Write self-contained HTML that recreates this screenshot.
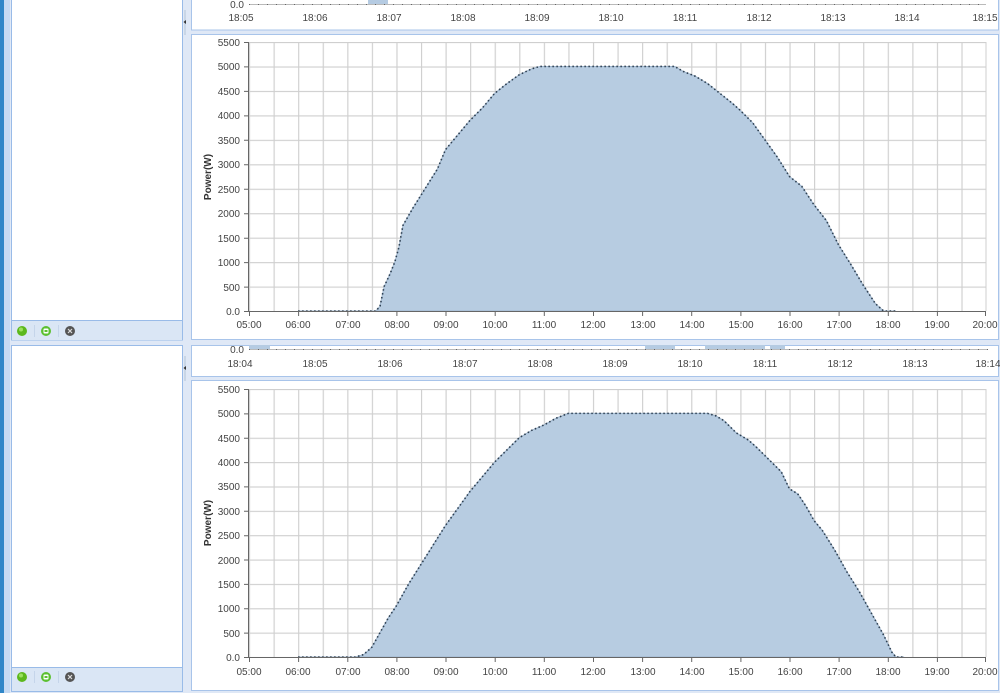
<!DOCTYPE html>
<html><head><meta charset="utf-8"><style>
html,body{margin:0;padding:0;width:1000px;height:693px;overflow:hidden;background:#dfe8f6}
svg{display:block}
text{font-family:"Liberation Sans",sans-serif;font-size:10px;fill:#444}
</style></head><body>
<svg width="1000" height="693" viewBox="0 0 1000 693" xmlns="http://www.w3.org/2000/svg">
<defs>
<pattern id="g1" x="249" y="42" width="24.567" height="24.455" patternUnits="userSpaceOnUse">
<path d="M0.5 0V24.455M0 0.5H24.567" stroke="#cfcfcf" stroke-width="1.3" fill="none"/>
</pattern>
<pattern id="g2" x="249" y="389" width="24.567" height="24.36" patternUnits="userSpaceOnUse">
<path d="M0.5 0V24.36M0 0.5H24.567" stroke="#cfcfcf" stroke-width="1.3" fill="none"/>
</pattern>
</defs>
<rect width="1000" height="693" fill="#dfe8f6"/>
<rect x="0" y="0" width="4" height="693" fill="#2f86c8"/>
<rect x="4" y="0" width="6" height="693" fill="#c5daf3"/>
<rect x="11.5" y="-1" width="171" height="341" fill="#fff" stroke="#99bbe8"/>
<rect x="12" y="320" width="170" height="20" fill="#dae6f5"/>
<line x1="12" y1="320.5" x2="182" y2="320.5" stroke="#99bbe8"/>
<rect x="11.5" y="345.5" width="171" height="346" fill="#fff" stroke="#99bbe8"/>
<rect x="12" y="667" width="170" height="24" fill="#dae6f5"/>
<line x1="12" y1="667.5" x2="182" y2="667.5" stroke="#99bbe8"/>
<g transform="translate(0,331)">
<circle cx="22" cy="0" r="5" fill="#5cb81d"/><circle cx="21" cy="-1.5" r="2" fill="#9be060"/>
<line x1="34.5" y1="-6" x2="34.5" y2="6" stroke="#c5d5ea"/>
<circle cx="46" cy="0" r="5" fill="#5cc030"/><rect x="43.5" y="-2.5" width="5" height="5" rx="1" fill="#fff"/><rect x="44.5" y="-1" width="3" height="2" fill="#5cc030"/>
<line x1="58.5" y1="-6" x2="58.5" y2="6" stroke="#c5d5ea"/>
<circle cx="70" cy="0" r="5" fill="#555"/><path d="M68 -2L72 2M72 -2L68 2" stroke="#ddd" stroke-width="1.2"/>
</g>
<g transform="translate(0,677)">
<circle cx="22" cy="0" r="5" fill="#5cb81d"/><circle cx="21" cy="-1.5" r="2" fill="#9be060"/>
<line x1="34.5" y1="-6" x2="34.5" y2="6" stroke="#c5d5ea"/>
<circle cx="46" cy="0" r="5" fill="#5cc030"/><rect x="43.5" y="-2.5" width="5" height="5" rx="1" fill="#fff"/><rect x="44.5" y="-1" width="3" height="2" fill="#5cc030"/>
<line x1="58.5" y1="-6" x2="58.5" y2="6" stroke="#c5d5ea"/>
<circle cx="70" cy="0" r="5" fill="#555"/><path d="M68 -2L72 2M72 -2L68 2" stroke="#ddd" stroke-width="1.2"/>
</g>
<rect x="183" y="0" width="6" height="341" fill="#dfe8f6"/>
<rect x="184" y="10" width="2" height="25" fill="#c9d6e6"/>
<path d="M186 20L183.5 22L186 24Z" fill="#333"/>
<rect x="184" y="356" width="2" height="25" fill="#c9d6e6"/>
<path d="M186 366L183.5 368L186 370Z" fill="#333"/>

<rect x="191.5" y="-1" width="807" height="31" fill="#fff" stroke="#a8c4ea"/>
<rect x="368" y="0" width="20" height="4" fill="#b5cbe2"/>
<line x1="249" y1="4.5" x2="986" y2="4.5" stroke="#555" stroke-dasharray="1 8"/>
<line x1="249" y1="4.5" x2="986" y2="4.5" stroke="#777" stroke-width="0.6"/>
<text x="244" y="8" text-anchor="end">0.0</text>
<g text-anchor="middle">
<text x="241" y="21">18:05</text><text x="315" y="21">18:06</text><text x="389" y="21">18:07</text><text x="463" y="21">18:08</text><text x="537" y="21">18:09</text><text x="611" y="21">18:10</text><text x="685" y="21">18:11</text><text x="759" y="21">18:12</text><text x="833" y="21">18:13</text><text x="907" y="21">18:14</text><text x="985" y="21">18:15</text>
</g>

<rect x="191.5" y="34.5" width="807" height="305" fill="#fff" stroke="#a8c4ea"/>
<rect x="249" y="42" width="737" height="269" fill="url(#g1)"/>
<line x1="986" y1="42" x2="986" y2="311" stroke="#cfcfcf"/>
<svg x="249" y="42" width="737" height="269" viewBox="0 0 900 5500" preserveAspectRatio="none" overflow="visible">
<g transform="translate(0,5500) scale(1,-1)">
<polygon fill="#b7cce1" stroke="#9fb6ce" vector-effect="non-scaling-stroke" points="60,0 155,0 160,100 165,500 172,750 178,1000 183,1300 188,1750 200,2100 215,2500 230,2900 240,3300 255,3600 270,3900 285,4150 300,4450 315,4650 330,4830 345,4950 355,5000 520,5000 530,4900 545,4800 560,4650 575,4450 590,4250 600,4100 615,3850 630,3500 645,3150 660,2750 675,2550 690,2170 705,1850 720,1350 735,950 750,530 765,150 775,0 790,0"/>
<polyline fill="none" stroke="#2c3e50" stroke-width="1.6" stroke-dasharray="1.5 2.5" vector-effect="non-scaling-stroke" points="60,0 155,0 160,100 165,500 172,750 178,1000 183,1300 188,1750 200,2100 215,2500 230,2900 240,3300 255,3600 270,3900 285,4150 300,4450 315,4650 330,4830 345,4950 355,5000 520,5000 530,4900 545,4800 560,4650 575,4450 590,4250 600,4100 615,3850 630,3500 645,3150 660,2750 675,2550 690,2170 705,1850 720,1350 735,950 750,530 765,150 775,0 790,0"/>
</g></svg>
<line x1="248.5" y1="42" x2="248.5" y2="311" stroke="#666"/>
<line x1="248" y1="311.5" x2="986" y2="311.5" stroke="#666"/>
<g stroke="#666">
<path d="M244 42.5H249M244 66.9H249M244 91.4H249M244 115.9H249M244 140.3H249M244 164.8H249M244 189.2H249M244 213.7H249M244 238.2H249M244 262.6H249M244 287.1H249M244 311.5H249"/>
<path d="M249.5 311V316M298.6 311V316M347.8 311V316M396.9 311V316M446 311V316M495.2 311V316M544.3 311V316M593.5 311V316M642.6 311V316M691.7 311V316M740.9 311V316M790 311V316M839.1 311V316M888.3 311V316M937.4 311V316M985.5 311V316"/>
</g>
<g text-anchor="end">
<text x="240" y="46">5500</text><text x="240" y="70">5000</text><text x="240" y="95">4500</text><text x="240" y="119">4000</text><text x="240" y="144">3500</text><text x="240" y="168">3000</text><text x="240" y="193">2500</text><text x="240" y="217">2000</text><text x="240" y="242">1500</text><text x="240" y="266">1000</text><text x="240" y="291">500</text><text x="240" y="315">0.0</text>
</g>
<g text-anchor="middle">
<text x="249" y="328">05:00</text><text x="298" y="328">06:00</text><text x="348" y="328">07:00</text><text x="397" y="328">08:00</text><text x="446" y="328">09:00</text><text x="495" y="328">10:00</text><text x="544" y="328">11:00</text><text x="593" y="328">12:00</text><text x="643" y="328">13:00</text><text x="692" y="328">14:00</text><text x="741" y="328">15:00</text><text x="790" y="328">16:00</text><text x="839" y="328">17:00</text><text x="888" y="328">18:00</text><text x="937" y="328">19:00</text><text x="985" y="328">20:00</text>
</g>
<text x="211" y="177" text-anchor="middle" transform="rotate(-90 211 177)" style="font-weight:bold;font-size:10px;fill:#333">Power(W)</text>

<rect x="191.5" y="345.5" width="807" height="31" fill="#fff" stroke="#a8c4ea"/>
<rect x="249" y="345" width="21" height="4" fill="#b5cbe2"/>
<rect x="645" y="345" width="30" height="4" fill="#b5cbe2"/>
<rect x="705" y="345" width="60" height="4" fill="#b5cbe2"/>
<rect x="770" y="345" width="15" height="4" fill="#b5cbe2"/>
<line x1="249" y1="349.5" x2="988" y2="349.5" stroke="#555" stroke-dasharray="1 8"/>
<line x1="249" y1="349.5" x2="988" y2="349.5" stroke="#777" stroke-width="0.6"/>
<text x="244" y="353" text-anchor="end">0.0</text>
<g text-anchor="middle">
<text x="240" y="367">18:04</text><text x="315" y="367">18:05</text><text x="390" y="367">18:06</text><text x="465" y="367">18:07</text><text x="540" y="367">18:08</text><text x="615" y="367">18:09</text><text x="690" y="367">18:10</text><text x="765" y="367">18:11</text><text x="840" y="367">18:12</text><text x="915" y="367">18:13</text><text x="988" y="367">18:14</text>
</g>

<rect x="191.5" y="380.5" width="807" height="310" fill="#fff" stroke="#a8c4ea"/>
<rect x="249" y="389" width="737" height="268" fill="url(#g2)"/>
<line x1="986" y1="389" x2="986" y2="657" stroke="#cfcfcf"/>
<svg x="249" y="389" width="737" height="268" viewBox="0 0 900 5500" preserveAspectRatio="none" overflow="visible">
<g transform="translate(0,5500) scale(1,-1)">
<polygon fill="#b7cce1" stroke="#9fb6ce" vector-effect="non-scaling-stroke" points="60,0 130,0 140,50 150,200 160,500 170,800 180,1050 195,1500 210,1900 225,2300 240,2700 255,3050 270,3400 285,3700 300,4000 315,4250 330,4500 345,4650 360,4760 375,4900 390,5000 560,5000 570,4950 580,4850 595,4600 610,4450 620,4300 635,4050 650,3800 660,3450 670,3350 680,3100 690,2800 700,2600 715,2200 730,1750 745,1350 760,900 775,450 785,100 790,0 800,0"/>
<polyline fill="none" stroke="#2c3e50" stroke-width="1.6" stroke-dasharray="1.5 2.5" vector-effect="non-scaling-stroke" points="60,0 130,0 140,50 150,200 160,500 170,800 180,1050 195,1500 210,1900 225,2300 240,2700 255,3050 270,3400 285,3700 300,4000 315,4250 330,4500 345,4650 360,4760 375,4900 390,5000 560,5000 570,4950 580,4850 595,4600 610,4450 620,4300 635,4050 650,3800 660,3450 670,3350 680,3100 690,2800 700,2600 715,2200 730,1750 745,1350 760,900 775,450 785,100 790,0 800,0"/>
</g></svg>
<line x1="248.5" y1="389" x2="248.5" y2="657" stroke="#666"/>
<line x1="248" y1="657.5" x2="986" y2="657.5" stroke="#666"/>
<g stroke="#666">
<path d="M244 389.5H249M244 413.9H249M244 438.2H249M244 462.6H249M244 486.9H249M244 511.3H249M244 535.7H249M244 560H249M244 584.4H249M244 608.7H249M244 633.1H249M244 657.5H249"/>
<path d="M249.5 657V662M298.6 657V662M347.8 657V662M396.9 657V662M446 657V662M495.2 657V662M544.3 657V662M593.5 657V662M642.6 657V662M691.7 657V662M740.9 657V662M790 657V662M839.1 657V662M888.3 657V662M937.4 657V662M985.5 657V662"/>
</g>
<g text-anchor="end">
<text x="240" y="393">5500</text><text x="240" y="417">5000</text><text x="240" y="442">4500</text><text x="240" y="466">4000</text><text x="240" y="490">3500</text><text x="240" y="515">3000</text><text x="240" y="539">2500</text><text x="240" y="564">2000</text><text x="240" y="588">1500</text><text x="240" y="612">1000</text><text x="240" y="637">500</text><text x="240" y="661">0.0</text>
</g>
<g text-anchor="middle">
<text x="249" y="675">05:00</text><text x="298" y="675">06:00</text><text x="348" y="675">07:00</text><text x="397" y="675">08:00</text><text x="446" y="675">09:00</text><text x="495" y="675">10:00</text><text x="544" y="675">11:00</text><text x="593" y="675">12:00</text><text x="643" y="675">13:00</text><text x="692" y="675">14:00</text><text x="741" y="675">15:00</text><text x="790" y="675">16:00</text><text x="839" y="675">17:00</text><text x="888" y="675">18:00</text><text x="937" y="675">19:00</text><text x="985" y="675">20:00</text>
</g>
<text x="211" y="523" text-anchor="middle" transform="rotate(-90 211 523)" style="font-weight:bold;font-size:10px;fill:#333">Power(W)</text>
</svg>
</body></html>
